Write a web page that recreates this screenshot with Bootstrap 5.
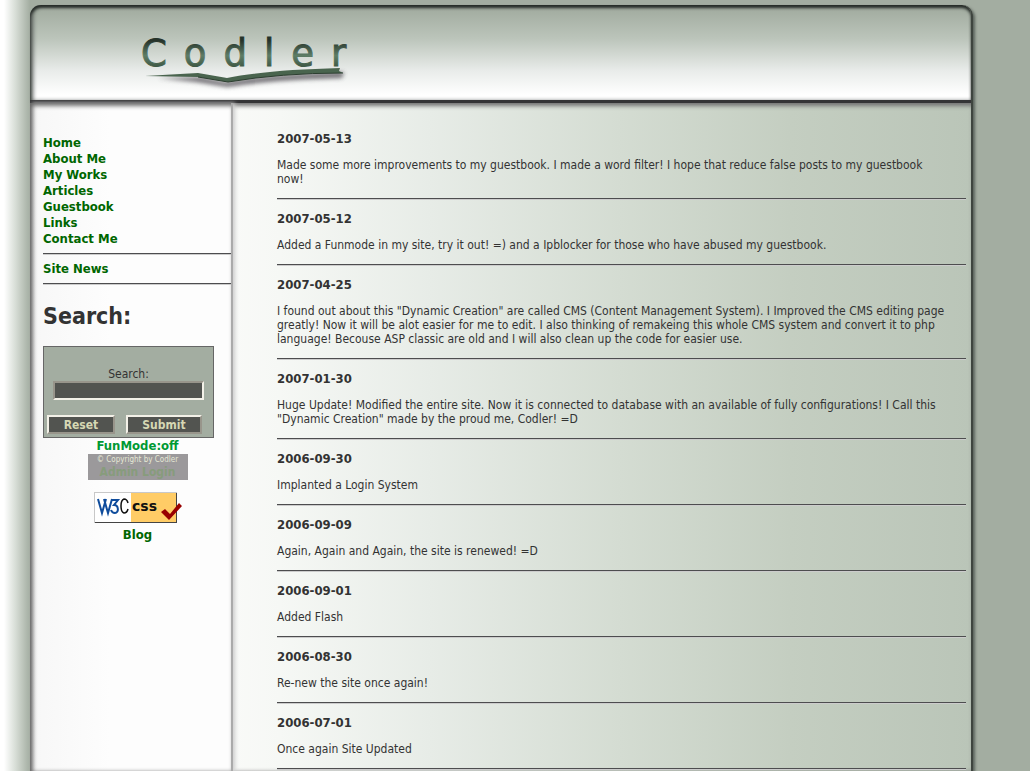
<!DOCTYPE html>
<html lang="en">
<head>
<meta charset="utf-8">
<meta name="viewport" content="width=device-width, initial-scale=1">
<title>Codler - Site News</title>
<link href="https://cdn.jsdelivr.net/npm/bootstrap@5.3.0/dist/css/bootstrap.min.css" rel="stylesheet">
<style>
  body {
    font-family: "DejaVu Sans Condensed", "DejaVu Sans", sans-serif;
    font-size: 12px; line-height: 14px; color: #333;
    background: #a3ada1 linear-gradient(90deg, #fff 4px, #d9dfd8 15px, #a3ada1 30px) no-repeat left top / 30px 100%;
  }
  .shell { max-width: 943px; margin: 5px 0 0 30px; border-radius: 11px 11px 0 0; border-right: 2px solid #3e453f;
    box-shadow: 2px 2px 3px #5a625b; }
  .site-head { height: 98px; border-radius: 11px 9px 0 0; border-bottom: 3px solid #343436;
    background: linear-gradient(#a3ada1 5px, #bcc5bb 34px, #e9ecea 66px, #fff 90px);
    box-shadow: inset 0 3px 3px #252b27, inset 4px 0 4px -1px #555a57; }
  .logo { margin: 27px 0 0 106px; }
  .site-body { min-height: calc(100vh - 103px);
    background: linear-gradient(90deg, #f9faf8 200px, #f6f8f5 250px, #e7ece7 400px, #d4dcd2 590px, #c4cec1 760px, #bac5b8);
    box-shadow: inset 0 5px 4px -2px #777, inset 4px 0 4px -1px #666; }
  .side { width: 203px; padding: 32px 0 0 13px; border-right: 2px solid #aaa; box-shadow: 2px 0 4px #ccc, inset 4px 0 4px -1px #666, inset 0 5px 4px -2px #777;
    background: linear-gradient(90deg, #f7f7f7, #fdfdfd 80px); }
  .side a { font-size: 13px; line-height: 16px; font-weight: bold; color: #060; text-decoration: none; }
  .side a.fun { color: #093; }
  .side h1 { font-size: 23px; line-height: 30px; font-weight: bold; margin: 16px 0 15px; }
  .rule { height: 2px; margin: 12px 0; border: 0; opacity: 1; background: linear-gradient(#4d4d4f 1px, #ccc 1px); }
  .side .rule { margin: 6px 0; }
  .find { width: 171px; height: 92px; padding: 20px 3px 0; border: 1px solid #666; background: #a3ada1; }
  .find input { width: 151px; height: 19px; padding: 0 3px; font-size: 12px; color: #d6d8b4; background: #525450; border: 2px solid; border-color: #98958b #f3f1e8 #f3f1e8 #98958b; }
  .find button { height: 19px; padding: 0; font-size: 12px; line-height: 14px; font-weight: bold; color: #d6d8b4; background: #525450; border: 2px solid; border-color: #f3f1e8 #98958b #98958b #f3f1e8; }
  .b-reset { width: 68px; } .b-submit { width: 76px; }
  .btn-line { margin-top: 15px; }
  .foot { width: 189px; }
  .copybox { width: 100px; height: 26px; font-size: 8px; line-height: 11px; color: #e5e8d5; background: #9b999b; }
  .side .copybox a { font-size: 12px; line-height: 14px; color: #879c7c; }
  .side a.blog { margin-top: 3px; }
  .news { padding: 29px 5px 0 44px; }
  .news h2 { font-size: 13px; line-height: 14px; font-weight: bold; margin: 0 0 12px; }
  .news p { margin: 0; padding-right: 18px; }
</style>
</head>
<body>
<div class="shell">
  <header class="site-head d-flex">
    <svg class="logo" width="250" height="60" viewBox="0 0 250 60" role="img" aria-label="Codler">
      <defs>
        <linearGradient id="ink" x1="0" y1="0" x2="0" y2="1"><stop offset="0.2" stop-color="#26332a"/><stop offset="0.55" stop-color="#5e7d66"/><stop offset="0.85" stop-color="#3a5340"/></linearGradient>
        <filter id="soft" x="-10%" y="-50%" width="120%" height="220%"><feGaussianBlur stdDeviation="2"/></filter>
      </defs>
      <text x="5" y="34" font-family="DejaVu Sans, sans-serif" font-size="37" letter-spacing="17" fill="url(#ink)" stroke="url(#ink)" stroke-width="1">Codler</text>
      <path d="M22 46 L64 45 L90 50 Q135 42 208 40 L206 46 Q135 48 91 55 L60 50 Z" fill="#555158" opacity=".8" filter="url(#soft)"/>
      <path d="M9 44 L62 41 L91 46 Q130 38 204 36 L203 39 L207 41 Q145 41 92 50 L62 45 Z" fill="#49644e"/>
      <path d="M62 45 L92 50 Q145 41 207 41" fill="none" stroke="#2c3e30" stroke-width="1"/>
    </svg>
  </header>
  <div class="site-body d-flex">
    <aside class="side flex-shrink-0">
      <nav class="d-flex flex-column align-items-start">
        <a href="#">Home</a><a href="#">About Me</a><a href="#">My Works</a><a href="#">Articles</a><a href="#">Guestbook</a><a href="#">Links</a><a href="#">Contact Me</a>
      </nav>
      <hr class="rule">
      <a class="d-block" href="#">Site News</a>
      <hr class="rule">
      <h1>Search:</h1>
      <form class="find d-flex flex-column align-items-center">
        <label for="q">Search:</label>
        <input id="q" type="text">
        <div class="btn-line d-flex w-100 justify-content-between pe-2">
          <button class="b-reset" type="reset">Reset</button>
          <button class="b-submit" type="submit">Submit</button>
        </div>
      </form>
      <div class="foot d-flex flex-column align-items-center">
        <a class="fun" href="#">FunMode:off</a>
        <div class="copybox text-center">© Copyright by Codler<a class="d-block" href="#">Admin Login</a></div>
        <a href="#" class="d-block mt-2 pt-1" aria-label="W3C CSS">
          <svg class="d-block" width="88" height="32" viewBox="0 0 88 32">
            <path d="M0 0h83v31H0z" fill="#c8c8c8"/><path d="M1 30h81V1h1v30H1z" fill="#444"/>
            <path d="M1 1h36v29H1z" fill="#fff"/><path d="M37 1h45v29H37z" fill="#fc6"/>
            <path d="M4 7l4 14 4-14M10 7l4 14 4-14" fill="none" stroke="#0f4c9c" stroke-width="2"/>
            <path d="M17 8h7l-4 5c5 0 5 8 1 8q-3 0-4-3" fill="none" stroke="#0f4c9c" stroke-width="2"/>
            <path d="M34 11q-1-4-4-4-3 1-3 7t3 7q3 0 4-4" fill="none" stroke="#111" stroke-width="1.5"/>
            <text x="38" y="19" font-family="DejaVu Sans, sans-serif" font-size="14" font-weight="bold" fill="#111">css</text>
            <path d="M67 20l4-3 5 5 9-11 3 3-13 14z" fill="#900"/>
          </svg>
        </a>
        <a class="blog" href="#">Blog</a>
      </div>
    </aside>
    <main class="news flex-grow-1">
      <h2>2007-05-13</h2><p>Made some more improvements to my guestbook. I made a word filter! I hope that reduce false posts to my guestbook now!</p><hr class="rule">
      <h2>2007-05-12</h2><p>Added a Funmode in my site, try it out! =) and a Ipblocker for those who have abused my guestbook.</p><hr class="rule">
      <h2>2007-04-25</h2><p>I found out about this "Dynamic Creation" are called CMS (Content Management System). I Improved the CMS editing page greatly! Now it will be alot easier for me to edit. I also thinking of remakeing this whole CMS system and convert it to php language! Becouse ASP classic are old and I will also clean up the code for easier use.</p><hr class="rule">
      <h2>2007-01-30</h2><p>Huge Update! Modified the entire site. Now it is connected to database with an available of fully configurations! I Call this "Dynamic Creation" made by the proud me, Codler! =D</p><hr class="rule">
      <h2>2006-09-30</h2><p>Implanted a Login System</p><hr class="rule">
      <h2>2006-09-09</h2><p>Again, Again and Again, the site is renewed! =D</p><hr class="rule">
      <h2>2006-09-01</h2><p>Added Flash</p><hr class="rule">
      <h2>2006-08-30</h2><p>Re-new the site once again!</p><hr class="rule">
      <h2>2006-07-01</h2><p>Once again Site Updated</p><hr class="rule mb-0">
    </main>
  </div>
</div>
<script src="https://cdn.jsdelivr.net/npm/bootstrap@5.3.0/dist/js/bootstrap.bundle.min.js"></script>
</body>
</html>
